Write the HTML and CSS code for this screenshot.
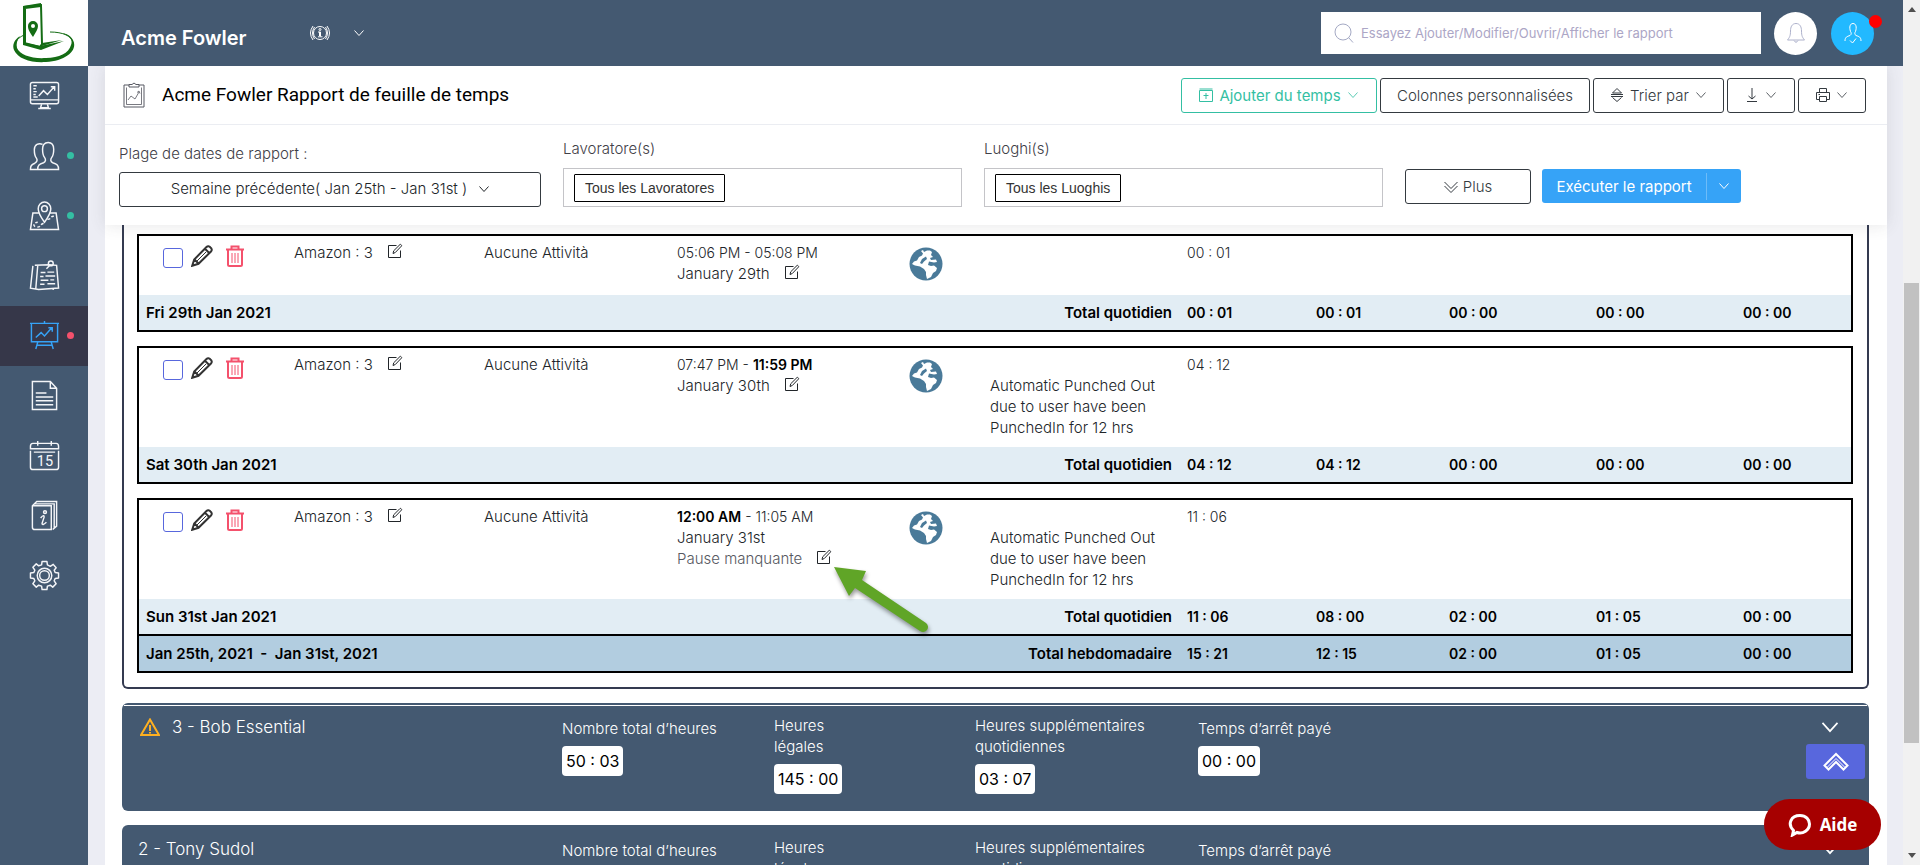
FILE: index.html
```html
<!DOCTYPE html>
<html lang="fr">
<head>
  <meta charset="UTF-8" />
  <meta name="viewport" content="width=device-width, initial-scale=1.0"/>
  <title>Rapport de feuille de temps</title>
  <link rel="stylesheet" href="styles.css">
</head>
<body>
  <!-- shared icons -->
  <svg class="sprite" aria-hidden="true">
    <symbol id="chevron" viewBox="0 0 12 12"><path d="M1.500 3.500L6 8.500L10.500 3.500"/></symbol>
    <symbol id="pencil" viewBox="0 0 22 22"><path d="M1.200 20.800L3.200 14.500L15.500 2C16.700 .8 18.200 1 19.500 2.500C21 3.800 21.200 5.300 20 6.500L7.500 18.800ZM14 3.800L18.200 8M3.500 14.500L7.500 18.500"/><path d="M6 16L15 7" stroke-width="1"/></symbol>
    <symbol id="trash" viewBox="0 0 20 22"><path d="M1 4.500H19 M6.500 4V1.500H13.500V4 M3 5V19.500C3 20.500 3.500 21 4.500 21H15.500C16.500 21 17 20.500 17 19.500V5"/><path stroke-width="1" d="M7 8V18 M10 8V18 M13 8V18"/></symbol>
    <symbol id="edit" viewBox="0 0 16 16"><path d="M9.500 2.500H1.500V14.500H13.500V7.500 M6 10.500L6.700 7.800L13 1.500C13.600 .9 15.100 2.400 14.500 3L8.300 9.500Z"/></symbol>
    <symbol id="globe" viewBox="0 0 34 34">
      <circle cx="17" cy="17" r="16.500" fill="#4a7a99"/>
      <path fill="#fff" d="M12 4L14 3L15 5L18 3.500L21 3.500L23 5L22 8L24 10L21 11L22 13L27 12.500L28 15L25 15.500L20 14.500L19 18L22 19L25 18.500L28 21L27 24L24 26L22 30L18 32L17 28V25L15 22L11 19.500L6 18.500L3 17L5 14.500L8 13.500L10 10L13 8.500L14 6.500Z"/>
      <path fill="#4a7a99" d="M13 12L17 9.500L18 12L15 14.500L13 17L11 16Z"/>
    </symbol>
  </svg>

  <aside class="sidebar">
    <a href="#" class="logo" aria-label="Accueil">
      <svg viewBox="0 0 88 66">
        <path class="line" d="M38 32C22 33 14 40 15 47M73 43C72 36 63 32 50 32" stroke-width="1"/>
        <path class="solid" d="M20 36C14 40 12 45 14 50C18 59 31 63 46 62C64 61 76 52 74 43C73 38 69 34 62 33C70 36 73 40 71 45C69 53 59 58 46 58C32 59 20 55 17 48C16 44 17 40 20 36Z"/>
        <path class="box" d="M24 7L41 5L42 44L40 47L24 43Z" stroke-width="2"/>
        <path class="solid" d="M23 7L26 6V43L40 46L64 41L41 50L23 45ZM23 6L41 3V7L25 9Z"/>
        <path class="solid" d="M42 43L62 40L42 46Z"/>
        <path class="solid" d="M33 37C29 31 28 29 28 26A5 5 0 0 1 38 26C38 29 36 32 33 37Z"/>
        <circle class="hole" cx="33" cy="26" r="2"/>
      </svg>
    </a>
    <nav class="menu">
      <a href="#" aria-label="Tableau de bord"><svg viewBox="0 0 32 32"><rect x="1.500" y="2.500" width="29" height="22" rx="2"/><path d="M2 20.500H30 M13 25L12 28.500H20L19 25 M9.500 29.500H22.500 M4.500 6H8 M4.500 9H7 M4.500 12H8 M4.500 15H7 M4.500 17.500H9 M10 16.500L15 11L19 15L26 7 M22.500 7H26.500V11"/></svg></a>
      <a href="#" class="dot green" aria-label="Travailleurs"><svg viewBox="0 0 32 32"><path d="M9 30.500H30.500C30.500 26 29 25 24.500 23.500C22 22.500 22 20 23.500 18C25 16 25.500 13.500 25.500 9.500C25.500 5 23.500 2.500 19.800 2.500S14 5 14 9.500C14 13.500 14.500 16 16 18C17.500 20 17.500 22.500 15 23.500C10.500 25 9 26 9 30.500ZM14 4.500C10 2.500 5.500 5 5.500 10C5.500 14 6 16.500 7.500 18.500C9 20.500 8.500 22.500 6 24C2.500 25.500 1.500 26.500 1.500 30.500H9"/></svg></a>
      <a href="#" class="dot green" aria-label="Lieux"><svg viewBox="0 0 32 32"><path d="M16 23C11 16 9.500 13 9.500 9A6.500 7 0 0 1 22.500 9C22.500 13 21 16 16 23ZM10 13.500H4L1.500 30.500H30.500L28 13.500H22"/><circle cx="16" cy="9" r="3"/><path stroke-dasharray="3 2" d="M15 24C10 26 13 28 8 28C3 27 5 23 9 23 M19 20C24 20 21 16 27 17"/></svg></a>
      <a href="#" aria-label="Notes"><svg viewBox="0 0 32 32"><path d="M6 5.500L21 5L28.500 5.500L30.500 29L10 30.500L1.500 29L4 6M9 6L7 29.500M25 30V31"/><circle cx="22.500" cy="3.500" r="2.500"/><path d="M21 6L18 9M12 13H17M19 12.500H26M11.500 17H15M17 16.500H27M12 21H20M22 20.500H26M11.500 25H16M19 24.500H27"/></svg></a>
      <a href="#" class="active dot red" aria-label="Rapports"><svg viewBox="0 0 32 32"><path d="M2.500 3.500H29.500V22.500H2.500ZM1 3.500H31M16 1V3.500M9 23L7 30M23 23L25 30M8 26H24M7 18L12.500 13L16 16.500L23.500 8M20 8H24V12"/></svg></a>
      <a href="#" aria-label="Documents"><svg viewBox="0 0 32 32"><path d="M3.500 1.500H22L28.500 8.500V30.500H3.500ZM22 1.500V8.500H28.500M7 13.500H18M7 17.500H25M7 21.500H25M7 25.500H25"/></svg></a>
      <a href="#" aria-label="Calendrier"><svg viewBox="0 0 32 32"><path d="M1.500 9V6.500Q1.500 3.500 4 3.500H28Q30.500 3.500 30.500 6.500V9ZM1.500 11V28Q1.500 30.500 4 30.500H28Q30.500 30.500 30.500 28V11M5 12.500H27M9 1V6M23 1V6"/><text x="8" y="27" class="day">15</text></svg></a>
      <a href="#" aria-label="Manuel"><svg viewBox="0 0 32 32"><path d="M4 6H23V30.500H6Q3.500 30.500 3.500 28V6L8 1.500H28.500V27L24.500 30.500M6 4H26V29M12 18.500Q16 14 15.500 18L13.500 24Q13.500 27 18 23"/><circle cx="16.500" cy="12.500" r="1.500"/></svg></a>
      <a href="#" aria-label="Paramètres"><svg viewBox="0 0 32 32"><path stroke-linejoin="round" d="M13.500 1.500H18.500L19 5L22 6.500L25 4.500L28 8L26 10.500L27 13L30.500 13.500V18.500L27 19L26 21.500L28 24.500L24.500 28L22 26L19 27L18.500 30.500H13.500L13 27L10 26L7.500 28L4 24.500L6 21.500L5 19L1.500 18.500V13.500L5 13L6 10.500L4 7.500L7.500 4L10 6L13 5Z"/><circle cx="16" cy="16" r="7.500"/><circle cx="16" cy="16" r="5"/></svg></a>
    </nav>
  </aside>

  <div class="page">
    <header class="topbar">
      <h2>Acme Fowler</h2>
      <button class="info" aria-label="Information">
        <svg class="info-icon" viewBox="0 0 22 16"><circle cx="11" cy="8" r="6.500"/><circle cx="11" cy="4.500" r="1"/><path d="M9 7H11.500V11.500M9 11.800H13.500M10.500 7V11M4 1Q-1 8 4 15M18 1Q23 8 18 15M5.500 2Q1.500 8 5.500 14M16.500 2Q20.500 8 16.500 14"/></svg>
        <svg class="chev"><use href="#chevron"/></svg>
      </button>
      <div class="search">
        <svg viewBox="0 0 20 20"><circle cx="9" cy="9" r="8"/><path d="M14.500 14.500L19 19.500"/></svg>
        <input type="search" aria-label="Rechercher" placeholder="Essayez Ajouter/Modifier/Ouvrir/Afficher le rapport">
      </div>
      <button class="round bell" aria-label="Notifications"><svg viewBox="0 0 20 22"><path d="M10 1.500C6 1.500 4.500 5 4.500 9C4.500 14 3.500 15.500 1.500 18H18.500C16.500 15.500 15.500 14 15.500 9C15.500 5 14 1.500 10 1.500ZM8 18.500Q10 22 12 18.500"/></svg></button>
      <button class="round user" aria-label="Profil"><svg viewBox="0 0 20 22"><path d="M2 19C2 15 4 14.500 7 13.500C8.500 12.500 8.500 11 7.500 9.500C6 5 7 1.500 10 1.500S14 5 12.500 9.500C11.500 11 11.500 12.500 13 13.500C16 14.500 18 15 18 19M7 18.500L9.500 21L13 16.500"/></svg></button>
    </header>

    <main>
      <div class="panel">
        <section class="filters-box">
          <div class="title-row">
            <svg class="clip" viewBox="0 0 22 26"><path d="M6 3H1V25H21V3H16M6 5V2.500H9Q11 -.5 13 2.500H16V5Z"/><path class="thin" d="M3.500 5.500V22.500H18.500V5.500M5 18L8 14L12 17L16 10M14 10.500L16 9L17 11.500"/></svg>
            <h1>Acme Fowler Rapport de feuille de temps</h1>
            <div class="actions">
              <button class="btn add"><svg viewBox="0 0 14 14"><path d="M.5 2.500V13.500H13.500V2.500ZM.5 1H13.500M7 5V11M4.500 7.500H9.500"/></svg>Ajouter du temps<svg class="chev"><use href="#chevron"/></svg></button>
              <button class="btn cols">Colonnes personnalisées</button>
              <button class="btn sort"><svg viewBox="0 0 14 14"><path d="M2.500 5L7 .5L11.500 5ZM1 6.500H13M1 8.500H13M2.500 9.500L7 13.500L11.500 9.500"/></svg>Trier par<svg class="chev"><use href="#chevron"/></svg></button>
              <button class="btn icon" aria-label="Télécharger"><svg viewBox="0 0 14 14"><path d="M7 0V11M3.500 8L7 11L10.500 8M2 13.500H12"/></svg><svg class="chev"><use href="#chevron"/></svg></button>
              <button class="btn icon" aria-label="Imprimer"><svg viewBox="0 0 14 14"><path d="M3.500 4.500V.5H10.500V4.500M3.500 11.500H.5V4.500H13.500V11.500H10.500M3.500 8.500H10.500V13.500H3.500ZM2.500 6.500H4"/></svg><svg class="chev"><use href="#chevron"/></svg></button>
            </div>
          </div>
          <form class="filters">
            <div class="field range">
              <label for="range">Plage de dates de rapport :</label>
              <div class="select-wrap">
                <select id="range"><option>Semaine précédente( Jan 25th - Jan 31st )</option></select>
                <svg class="chev"><use href="#chevron"/></svg>
              </div>
            </div>
            <div class="field">
              <label for="workers">Lavoratore(s)</label>
              <div class="tags"><span>Tous les Lavoratores</span><input type="text" id="workers"></div>
            </div>
            <div class="field">
              <label for="places">Luoghi(s)</label>
              <div class="tags"><span>Tous les Luoghis</span><input type="text" id="places"></div>
            </div>
            <div class="run">
              <button type="button" class="btn more"><svg viewBox="0 0 14 14"><path d="M.5 2L7 8.500L13.500 2M.5 6L7 12.500L13.500 6"/></svg>Plus</button>
              <div class="split">
                <button type="button">Exécuter le rapport</button>
                <button type="button" class="drop" aria-label="Options"><svg class="chev"><use href="#chevron"/></svg></button>
              </div>
            </div>
          </form>
        </section>

        <section class="worker-report">
          <table>
            <colgroup><col class="c1"><col class="c2"><col class="c3"><col class="c4"><col class="c5"><col class="c6"><col class="c7"><col class="c8"><col class="c9"><col class="c9"><col class="c11"></colgroup>
            <tr>
              <td><div class="tools"><input type="checkbox" aria-label="Fri 29th Jan"><button aria-label="Modifier"><svg class="pencil"><use href="#pencil"/></svg></button><button aria-label="Supprimer"><svg class="trash"><use href="#trash"/></svg></button></div></td>
              <td>Amazon : 3<svg class="edit"><use href="#edit"/></svg></td>
              <td>Aucune Attività</td>
              <td><span class="time">05:06 PM - 05:08 PM</span><br>January 29th<svg class="edit"><use href="#edit"/></svg></td>
              <td><svg class="globe"><use href="#globe"/></svg></td>
              <td></td>
              <td><span class="time">00 : 01</span></td>
              <td></td><td></td><td></td><td></td>
            </tr>
            <tr class="total">
              <th colspan="3">Fri 29th Jan 2021</th><th colspan="3" class="right">Total quotidien</th>
              <td>00 : 01</td><td>00 : 01</td><td>00 : 00</td><td>00 : 00</td><td>00 : 00</td>
            </tr>
          </table>

          <table>
            <colgroup><col class="c1"><col class="c2"><col class="c3"><col class="c4"><col class="c5"><col class="c6"><col class="c7"><col class="c8"><col class="c9"><col class="c9"><col class="c11"></colgroup>
            <tr>
              <td><div class="tools"><input type="checkbox" aria-label="Sat 30th Jan"><button aria-label="Modifier"><svg class="pencil"><use href="#pencil"/></svg></button><button aria-label="Supprimer"><svg class="trash"><use href="#trash"/></svg></button></div></td>
              <td>Amazon : 3<svg class="edit"><use href="#edit"/></svg></td>
              <td>Aucune Attività</td>
              <td><span class="time">07:47 PM - <b>11:59 PM</b></span><br>January 30th<svg class="edit"><use href="#edit"/></svg></td>
              <td><svg class="globe"><use href="#globe"/></svg></td>
              <td class="note">Automatic Punched Out<br>due to user have been<br>PunchedIn for 12 hrs</td>
              <td><span class="time">04 : 12</span></td>
              <td></td><td></td><td></td><td></td>
            </tr>
            <tr class="total">
              <th colspan="3">Sat 30th Jan 2021</th><th colspan="3" class="right">Total quotidien</th>
              <td>04 : 12</td><td>04 : 12</td><td>00 : 00</td><td>00 : 00</td><td>00 : 00</td>
            </tr>
          </table>

          <table>
            <colgroup><col class="c1"><col class="c2"><col class="c3"><col class="c4"><col class="c5"><col class="c6"><col class="c7"><col class="c8"><col class="c9"><col class="c9"><col class="c11"></colgroup>
            <tr>
              <td><div class="tools"><input type="checkbox" aria-label="Sun 31st Jan"><button aria-label="Modifier"><svg class="pencil"><use href="#pencil"/></svg></button><button aria-label="Supprimer"><svg class="trash"><use href="#trash"/></svg></button></div></td>
              <td>Amazon : 3<svg class="edit"><use href="#edit"/></svg></td>
              <td>Aucune Attività</td>
              <td class="pointed"><span class="time"><b>12:00 AM</b> - 11:05 AM</span><br>January 31st<br><span class="missing">Pause manquante</span><svg class="edit"><use href="#edit"/></svg>
                <svg class="arrow" viewBox="0 0 100 72"><path d="M2 2L34 6L30 15L94 58A5 5 0 0 1 88 66L23 23L17 31Z"/></svg>
              </td>
              <td><svg class="globe"><use href="#globe"/></svg></td>
              <td class="note">Automatic Punched Out<br>due to user have been<br>PunchedIn for 12 hrs</td>
              <td><span class="time">11 : 06</span></td>
              <td></td><td></td><td></td><td></td>
            </tr>
            <tr class="total">
              <th colspan="3">Sun 31st Jan 2021</th><th colspan="3" class="right">Total quotidien</th>
              <td>11 : 06</td><td>08 : 00</td><td>02 : 00</td><td>01 : 05</td><td>00 : 00</td>
            </tr>
            <tr class="total week">
              <th colspan="3">Jan 25th, 2021 &nbsp;-&nbsp; Jan 31st, 2021</th><th colspan="3" class="right">Total hebdomadaire</th>
              <td>15 : 21</td><td>12 : 15</td><td>02 : 00</td><td>01 : 05</td><td>00 : 00</td>
            </tr>
          </table>
        </section>

        <section class="worker lined">
          <h3><svg viewBox="0 0 20 18"><path d="M10 1.500L19 17H1ZM10 7V13M10 14V15.500"/></svg>3 - Bob Essential</h3>
          <div class="stat"><span>Nombre total d’heures</span><strong>50 : 03</strong></div>
          <div class="stat two"><span>Heures<br>légales</span><strong>145 : 00</strong></div>
          <div class="stat two"><span>Heures supplémentaires<br>quotidiennes</span><strong>03 : 07</strong></div>
          <div class="stat"><span>Temps d’arrêt payé</span><strong>00 : 00</strong></div>
          <button class="toggle" aria-label="Ouvrir"><svg><use href="#chevron"/></svg></button>
        </section>

        <section class="worker">
          <h3>2 - Tony Sudol</h3>
          <div class="stat"><span>Nombre total d’heures</span></div>
          <div class="stat two"><span>Heures<br>légales</span></div>
          <div class="stat two"><span>Heures supplémentaires<br>quotidiennes</span></div>
          <div class="stat"><span>Temps d’arrêt payé</span></div>
          <button class="toggle" aria-label="Ouvrir"><svg><use href="#chevron"/></svg></button>
        </section>
      </div>
    </main>
  </div>

  <div class="scrollbar"><i class="up"></i><div class="thumb"></div><i class="down"></i></div>

  <button class="to-top" aria-label="Haut de page"><svg viewBox="0 0 26 20"><path d="M1.500 13.500L13 2L24.500 13.500L20.500 17.500L13 10L5.500 17.500Z"/><path d="M4 15.500L13 6.500L22 15.500" stroke-width="1"/></svg></button>
  <button class="help"><svg viewBox="0 0 24 24"><path d="M4.500 22L5.500 17.500C-1 11 3 2.500 12 2.500C18 2.500 21.500 6.500 21.500 11C21.500 17 15 21.500 9 19.500Z"/></svg>Aide</button>
</body>
</html>
```
FILE: styles.css
```css
:root {
  --slate: #445971;
  --dark: #343a40;
  --green: #34bfa3;
  --band: #e2edf4;
  --week: #b2cde0;
}

* {
  box-sizing: border-box;
  margin: 0;
  padding: 0;
}

body {
  font-family: Inter, 'Open Sans', sans-serif;
  font-size: 15px;
  font-weight: 300;
  line-height: 21px;
  color: #212529;
  display: flex;
  height: 100vh;
  overflow: hidden;
}

button, input, select {
  font: inherit;
  color: inherit;
  background: none;
  border: none;
}

button {
  cursor: pointer;
}

svg {
  fill: none;
  stroke: currentColor;
  flex: none;
}

.sprite {
  position: absolute;
  width: 0;
  height: 0;
}

.chev {
  width: 12px;
  height: 12px;
}

/* left menu */
.sidebar {
  width: 88px;
  background: var(--slate);
  flex: none;
}

.logo {
  display: block;
  height: 66px;
  background: #fff;
  color: #146c14;
}

.logo .solid {
  fill: currentColor;
  stroke: none;
}

.logo .box {
  fill: #fff;
}

.logo .hole {
  fill: #fff;
  stroke: none;
}

.menu a {
  display: flex;
  align-items: center;
  justify-content: center;
  height: 60px;
  padding-bottom: 2px;
  color: #f4f5f8;
  position: relative;
}

.menu svg {
  width: 31px;
  height: 31px;
  stroke-width: 1.5;
}

.menu .day {
  font: 15px Roboto, sans-serif;
  fill: #f4f5f8;
  stroke: none;
}

.menu .active {
  background: #363749;
  color: #36a3f7;
}

.menu .dot::after {
  content: '';
  position: absolute;
  left: 67px;
  top: 26px;
  width: 7px;
  height: 7px;
  border-radius: 50%;
  background: var(--green);
}

.menu .dot.red::after {
  background: #f4516c;
}

/* top bar */
.page {
  flex: 1;
  min-width: 0;
  display: flex;
  flex-direction: column;
}

.topbar {
  height: 66px;
  flex: none;
  background: var(--slate);
  color: #fff;
  display: flex;
  align-items: center;
  padding: 0 29px 0 33px;
}

.topbar h2 {
  font-size: 20px;
  font-weight: 600;
  padding-top: 10px;
}

.info {
  display: flex;
  align-items: center;
  gap: 22px;
  margin-left: 62px;
}

.info-icon {
  width: 22px;
  height: 16px;
}

.search {
  margin-left: auto;
  width: 440px;
  height: 42px;
  background: #fff;
  display: flex;
  align-items: center;
  gap: 7px;
  padding: 0 13px;
  color: #a4a9c4;
}

.search svg {
  width: 20px;
  height: 20px;
  stroke-width: 1;
}

.search input {
  flex: 1;
  font-size: 13px;
  font-weight: 400;
  outline: none;
}

.search input::placeholder {
  color: #aca6c6;
}

.round {
  width: 43px;
  height: 43px;
  border-radius: 50%;
  margin-left: 14px;
  display: flex;
  align-items: center;
  justify-content: center;
  position: relative;
}

.search + .round {
  margin-left: 13px;
}

.round svg {
  width: 20px;
  height: 22px;
}

.bell {
  background: #fff;
  color: #aeb2cc;
}

.user {
  background: #22b9ff;
}

.user::after {
  content: '';
  position: absolute;
  right: -8px;
  top: 3px;
  width: 13px;
  height: 13px;
  border-radius: 50%;
  background: #f00;
}

main {
  flex: 1;
  min-height: 0;
  overflow: hidden;
  background: #ecedf4;
  padding: 0 16px 0 17px;
}

.panel {
  background: #fff;
}

.filters-box {
  background: #fff;
  box-shadow: 0 1px 15px rgba(69, 65, 78, 0.12);
}

.title-row {
  display: flex;
  align-items: center;
  height: 59px;
  padding: 0 21px 0 18px;
  border-bottom: 1px solid #ebedf2;
}

.clip {
  width: 22px;
  height: 26px;
  color: #575962;
}

.clip .thin {
  stroke-width: 1;
  opacity: 0.8;
}

.title-row h1 {
  font: 400 19px/24px Roboto, sans-serif;
  color: #000;
  margin-left: 17px;
}

.actions {
  margin-left: auto;
  display: flex;
  gap: 3px;
}

.btn {
  height: 35px;
  border: 1px solid var(--dark);
  border-radius: 3px;
  color: var(--dark);
  display: flex;
  align-items: center;
  justify-content: center;
  gap: 6px;
  white-space: nowrap;
}

.btn svg:first-child {
  width: 14px;
  height: 14px;
}

.btn .chev {
  stroke-width: 1;
  opacity: 0.8;
}

.add {
  width: 196px;
  border-color: var(--green);
  color: var(--green);
  font-weight: 400;
}

.cols {
  width: 210px;
}

.sort {
  width: 131px;
}

.icon {
  width: 68px;
}

.filters {
  display: flex;
  gap: 22px;
  height: 100px;
  padding: 13px 14px 0;
}

.field {
  flex: 0 1 399px;
}

.field label {
  display: block;
  color: #3f4047;
  margin-bottom: 9px;
}

.range {
  flex-basis: 422px;
  padding-top: 5px;
}

.range label {
  margin-bottom: 8px;
}

.select-wrap {
  position: relative;
}

.select-wrap select {
  appearance: none;
  width: 100%;
  height: 35px;
  padding: 0 22px 2px 0;
  border: 1px solid var(--dark);
  border-radius: 3px;
  text-align: center;
  text-align-last: center;
}

.select-wrap .chev {
  position: absolute;
  left: calc(50% + 148px);
  top: 11px;
}

.tags {
  height: 39px;
  border: 1px solid #c4c4c8;
  display: flex;
  align-items: center;
  padding: 0 10px;
}

.tags span {
  border: 1px solid #000;
  border-radius: 1px;
  padding: 2px 10px;
  font: 14px/22px 'Liberation Sans', sans-serif;
  color: #333;
}

.tags input {
  flex: 1;
  min-width: 0;
  outline: none;
}

.run {
  display: flex;
  gap: 11px;
  padding-top: 31px;
}

.more {
  width: 126px;
  gap: 5px;
}

.split {
  display: flex;
  align-items: center;
  height: 34px;
  background: #36a3f7;
  border-radius: 3px;
  color: #fff;
}

.split button {
  height: 27px;
  width: 165px;
  font-weight: 400;
  border-right: 1px solid #6dbcf9;
  white-space: nowrap;
}

.split .drop {
  width: 34px;
  border: none;
}

/* timesheet tables */
.worker-report {
  margin: 0 18px 14px 17px;
  padding: 9px 14px 14px 13px;
  border: 2px solid #343a50;
  border-top: none;
  border-radius: 0 0 6px 6px;
}

table {
  width: 100%;
  table-layout: fixed;
  border-spacing: 0;
  border: 2px solid #000;
  margin-bottom: 14px;
}

table:last-child {
  margin-bottom: 0;
}

.c1 { width: 148px; }
.c2 { width: 190px; }
.c3 { width: 193px; }
.c4 { width: 232px; }
.c5 { width: 81px; }
.c6 { width: 197px; }
.c7 { width: 129px; }
.c8 { width: 133px; }
.c9 { width: 147px; }
.c11 { width: 115px; }

td, th {
  padding: 6px 7px 9px;
  text-align: left;
  vertical-align: top;
  white-space: nowrap;
}

td b {
  font-weight: 600;
  color: #000;
}

.time {
  font-size: 14px;
}

.note {
  padding-top: 27px;
}

.missing {
  color: #575962;
}

.total td, .total th {
  height: 35px;
  padding: 0 7px;
  background: var(--band);
  color: #000;
  font-weight: 600;
  vertical-align: middle;
}

.total td {
  font-size: 14px;
}

.total .right {
  text-align: right;
  padding-right: 8px;
}

.week td, .week th {
  height: 37px;
  background: var(--week);
  border-top: 2px solid #000;
}

.tools {
  display: flex;
  align-items: center;
  gap: 8px;
  padding: 2px 0 0 17px;
}

.tools input {
  appearance: none;
  width: 20px;
  height: 20px;
  margin-top: 4px;
  border: 1px solid #5867dd;
  border-radius: 3px;
}

.tools button {
  height: 22px;
  margin-right: 4px;
}

.pencil {
  width: 22px;
  height: 22px;
  color: #333;
  stroke-width: 2;
}

.trash {
  width: 20px;
  height: 22px;
  color: #f4516c;
  stroke-width: 2;
}

.edit {
  width: 16px;
  height: 16px;
  margin-left: 14px;
  vertical-align: -1px;
}

.globe {
  width: 34px;
  height: 34px;
  margin-top: 5px;
  stroke: none;
}

.pointed {
  position: relative;
}

.arrow {
  position: absolute;
  left: 162px;
  top: 65px;
  width: 100px;
  height: 72px;
  fill: #60a527;
  stroke: none;
  filter: drop-shadow(1px 3px 2px rgba(0, 0, 0, 0.4));
  z-index: 1;
}

/* collapsed workers */
.worker {
  margin: 0 18px 14px 17px;
  height: 108px;
  padding: 14px 31px 0 16px;
  background: var(--slate);
  border-radius: 6px;
  color: #fff;
  display: grid;
  grid-template-columns: 424fr 212fr 201fr 223fr 622fr 18px;
  position: relative;
}

.lined::before {
  content: '';
  position: absolute;
  left: 2px;
  right: 2px;
  top: 2px;
  height: 1px;
  background: #fff;
}

.worker h3 {
  font-size: 17px;
  font-weight: 300;
  line-height: 21px;
}

.worker h3 svg {
  width: 20px;
  height: 18px;
  margin: 0 12px 0 2px;
  color: #ffb020;
  stroke-width: 2;
  vertical-align: -3px;
}

.stat {
  padding-top: 1px;
}

.stat.two {
  margin-top: -3px;
}

.stat span {
  display: block;
  margin-bottom: 7px;
}

.stat strong {
  display: inline-block;
  background: #fff;
  color: #000;
  border-radius: 4px;
  padding: 0 4px;
  font-size: 16px;
  font-weight: 400;
  line-height: 30px;
}

.toggle {
  align-self: start;
}

.toggle svg {
  width: 20px;
  height: 20px;
  stroke-width: 1;
}

/* floating parts */
.to-top {
  position: fixed;
  right: 55px;
  bottom: 86px;
  width: 59px;
  height: 35px;
  border-radius: 3px;
  background: #5867dd;
  color: #fff;
}

.to-top svg {
  width: 26px;
  height: 20px;
  stroke-width: 2;
  display: block;
  margin: 0 auto;
}

.help {
  position: fixed;
  right: 39px;
  bottom: 15px;
  width: 117px;
  height: 51px;
  border-radius: 26px;
  background: #a60000;
  color: #fff;
  font: 700 17px 'Open Sans', sans-serif;
  display: flex;
  align-items: center;
  justify-content: center;
  gap: 8px;
}

.help svg {
  width: 24px;
  height: 24px;
  stroke-width: 3;
}

.scrollbar {
  width: 17px;
  flex: none;
  background: #f1f1f1;
  display: flex;
  flex-direction: column;
  align-items: center;
  padding: 7px 0;
}

.thumb {
  width: 15px;
  height: 54%;
  margin: 271px 0 auto;
  background: #c1c1c1;
}

.scrollbar i {
  border: 4px solid transparent;
}

.scrollbar .up {
  border-top: none;
  border-bottom: 5px solid #505050;
}

.scrollbar .down {
  border-bottom: none;
  border-top: 5px solid #505050;
}
```
